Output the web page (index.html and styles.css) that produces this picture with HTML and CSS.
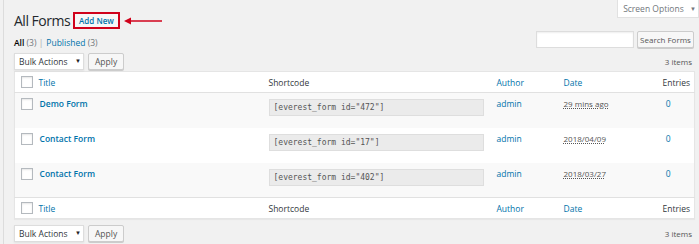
FILE: index.html
```html
<!DOCTYPE html>
<html>
<head>
<meta charset="utf-8">
<link rel="stylesheet" href="styles.css">
</head>
<body>
<div class="wrap">
  <div class="screen-meta">
    <button class="screen-options">Screen Options <span class="tri">▼</span></button>
  </div>
  <div class="heading">
    <h1>All Forms</h1>
    <a class="add-new">Add New</a>
    <svg class="arrow" width="38" height="8" viewBox="0 0 38 8"><path d="M6 4H38" stroke="#d0021b" stroke-width="1.5"/><path d="M0 4L7 0.5V7.5Z" fill="#d0021b"/></svg>
  </div>
  <div class="subrow">
    <ul class="subsubsub">
      <li><a class="current">All</a> <span class="count">(3)</span> |</li>
      <li><a>Published</a> <span class="count">(3)</span></li>
    </ul>
    <div class="search">
      <input type="text" class="search-input">
      <button class="btn search-btn">Search Forms</button>
    </div>
  </div>
  <div class="tablenav">
    <div class="actions">
      <div class="select">Bulk Actions <span class="tri">▼</span></div>
      <button class="btn">Apply</button>
    </div>
    <span class="items">3 items</span>
  </div>
  <table class="list">
    <colgroup>
      <col class="c-cb"><col class="c-title"><col class="c-sc"><col class="c-author"><col class="c-date"><col class="c-entries">
    </colgroup>
    <thead>
      <tr>
        <th><span class="cb"></span></th>
        <th><a>Title</a></th>
        <th class="plain">Shortcode</th>
        <th><a>Author</a></th>
        <th><a>Date</a></th>
        <th class="plain right">Entries</th>
      </tr>
    </thead>
    <tbody>
      <tr class="alt">
        <td><span class="cb"></span></td>
        <td><a class="title">Demo Form</a></td>
        <td><div class="code">[everest_form id="472"]</div></td>
        <td><a>admin</a></td>
        <td><abbr>29 mins ago</abbr></td>
        <td class="center"><a>0</a></td>
      </tr>
      <tr>
        <td><span class="cb"></span></td>
        <td><a class="title">Contact Form</a></td>
        <td><div class="code">[everest_form id="17"]</div></td>
        <td><a>admin</a></td>
        <td><abbr>2018/04/09</abbr></td>
        <td class="center"><a>0</a></td>
      </tr>
      <tr class="alt">
        <td><span class="cb"></span></td>
        <td><a class="title">Contact Form</a></td>
        <td><div class="code">[everest_form id="402"]</div></td>
        <td><a>admin</a></td>
        <td><abbr>2018/03/27</abbr></td>
        <td class="center"><a>0</a></td>
      </tr>
    </tbody>
    <tfoot>
      <tr>
        <th><span class="cb"></span></th>
        <th><a>Title</a></th>
        <th class="plain">Shortcode</th>
        <th><a>Author</a></th>
        <th><a>Date</a></th>
        <th class="plain right">Entries</th>
      </tr>
    </tfoot>
  </table>
  <div class="tablenav bottom">
    <div class="actions">
      <div class="select">Bulk Actions <span class="tri">▼</span></div>
      <button class="btn">Apply</button>
    </div>
    <span class="items">3 items</span>
  </div>
</div>
</body>
</html>
```
FILE: styles.css
```css
html, body {
  margin: 0;
  padding: 0;
  background: #f1f1f1;
}
body {
  font-family: "Open Sans", "Noto Sans", sans-serif;
  font-size: 9px;
  color: #444;
  width: 699px;
  height: 244px;
  overflow: hidden;
}
.wrap {
  position: relative;
  margin-left: 3px;
  border-left: 1px solid #dcdcdc;
  padding: 0 5px 0 10px;
  height: 244px;
}
a { color: #0073aa; text-decoration: none; }
button { font-family: inherit; }

.screen-meta {
  position: absolute;
  right: 0;
  top: 0;
}
.screen-options {
  background: #fff;
  border: 1px solid #e1e1e1;
  border-top: none;
  height: 18px;
  width: 82px;
  font-size: 8.5px;
  color: #72777c;
  padding: 0 0 0 3px;
}
.tri { font-size: 6px; margin-left: 4px; vertical-align: 1px; }

.heading {
  display: flex;
  align-items: center;
  padding-top: 11px;
  height: 19px;
}
h1 {
  margin: 0;
  font-weight: 400;
  font-size: 14px;
  color: #23282d;
  letter-spacing: -0.5px;
}
.add-new {
  margin-left: 3px;
  border: 2px solid #d0021b;
  padding: 1px 4px;
  font-size: 8px;
  font-weight: 600;
  line-height: 11px;
  background: #f7f7f7;
}
.arrow { margin-left: 4px; }

.subrow {
  display: flex;
  justify-content: space-between;
  align-items: flex-start;
  height: 22px;
}
.subsubsub {
  list-style: none;
  margin: 7px 0 0;
  padding: 0;
  display: flex;
  gap: 3px;
  color: #aaa;
  font-size: 8.5px;
}
.subsubsub .current { color: #000; font-weight: 600; }
.count { color: #72777c; }
.search {
  display: flex;
  gap: 3px;
  margin-top: 1px;
}
.search-input {
  width: 96px;
  height: 15px;
  border: 1px solid #ddd;
  background: #fff;
  padding: 0;
  margin: 0;
  box-shadow: inset 0 1px 2px rgba(0,0,0,0.07);
}
.btn {
  height: 17px;
  border: 1px solid #ccc;
  background: #f7f7f7;
  color: #555;
  font-size: 8.5px;
  padding: 0 3px;
  border-radius: 2px;
  box-shadow: 0 1px 0 #ccc;
}
.search-btn { font-size: 8px; width: 57px; padding: 0; }

.tablenav {
  display: flex;
  justify-content: space-between;
  align-items: center;
  height: 18px;
  margin-bottom: 1px;
}
.tablenav.bottom { margin-top: 5px; }
.actions { display: flex; gap: 4px; align-items: center; }
.select {
  width: 62px;
  height: 15px;
  border: 1px solid #ddd;
  background: #fff;
  font-size: 8.5px;
  color: #32373c;
  padding: 0 2px 0 4px;
  display: flex;
  align-items: center;
  justify-content: space-between;
  box-shadow: 0 1px 2px rgba(0,0,0,0.07);
}
.select .tri { color: #222; }
.tablenav .btn { height: 17px; padding: 0 6px; }
.items { font-size: 8px; color: #555; margin-right: 2px; }

.list {
  width: 680px;
  border-collapse: collapse;
  table-layout: fixed;
  background: #fff;
  border: 1px solid #e5e5e5;
  box-shadow: 0 1px 1px rgba(0,0,0,0.04);
}
.c-cb { width: 24px; }
.c-title { width: 230px; }
.c-sc { width: 228px; }
.c-author { width: 67px; }
.c-date { width: 85px; }
.c-entries { width: 46px; }

th, td {
  text-align: left;
  font-weight: 400;
  padding: 0;
  font-size: 8.5px;
}
thead th { border-bottom: 1px solid #e1e1e1; height: 20px; }
tfoot th { border-top: 1px solid #e1e1e1; height: 20px; }
th.plain { color: #32373c; }
th.right { text-align: right; padding-right: 4px; }
.cb {
  display: block;
  width: 10px;
  height: 10px;
  border: 1px solid #b4b9be;
  background: #fff;
  margin-left: 6px;
  box-shadow: inset 0 1px 2px rgba(0,0,0,0.1);
}
tbody td {
  height: 35px;
  vertical-align: top;
  padding-top: 5px;
  box-sizing: border-box;
}
tbody tr.alt { background: #f9f9f9; }
tbody td a, tbody td abbr { display: inline-block; }
a.title { font-weight: 600; font-size: 8.5px; margin-left: 1px; }
.code {
  width: 215px;
  height: 17px;
  margin-top: 1px;
  background: #ebebeb;
  border: 1px solid #dedede;
  font-family: "DejaVu Sans Mono", monospace;
  font-size: 8px;
  color: #555;
  line-height: 15px;
  padding-left: 4px;
  box-sizing: border-box;
}
abbr {
  text-decoration: underline dotted;
  color: #555;
  font-size: 8px;
}
td.center { text-align: center; padding-right: 6px; }
```
